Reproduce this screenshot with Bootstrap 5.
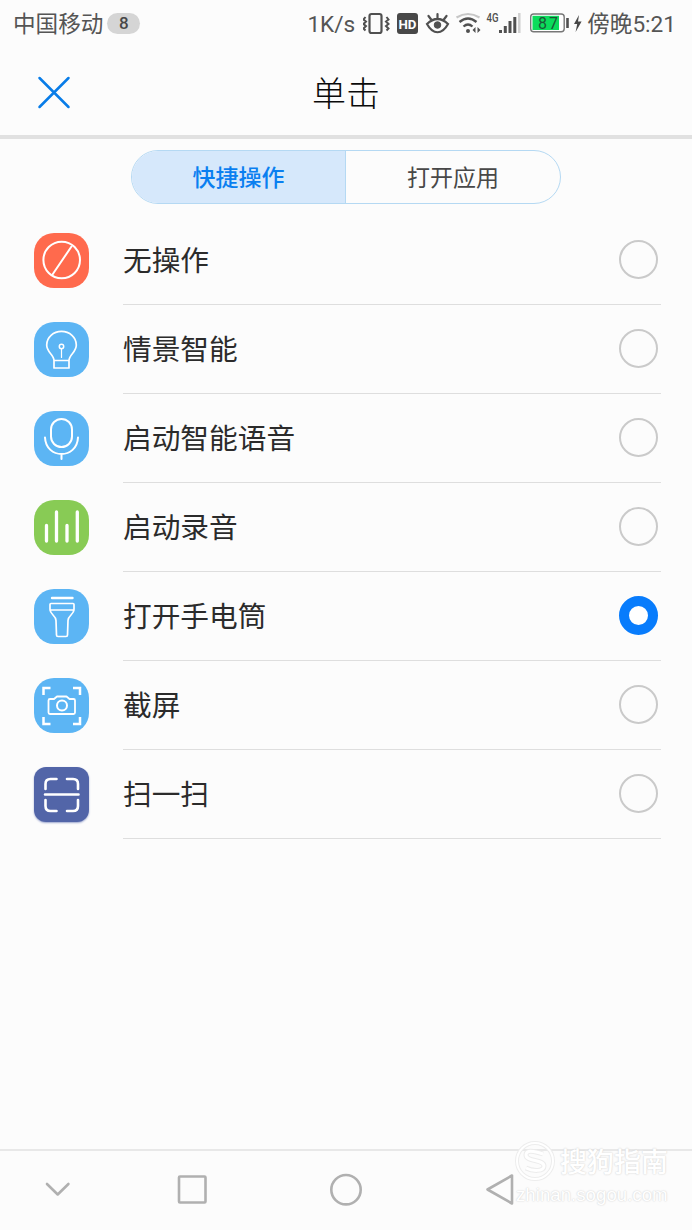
<!DOCTYPE html>
<html lang="zh-CN">
<head>
<meta charset="utf-8">
<meta name="viewport" content="width=device-width, initial-scale=1">
<title>单击</title>
<link rel="stylesheet" href="https://cdn.jsdelivr.net/npm/bootstrap@5.3.0/dist/css/bootstrap.min.css">
<style>
body{background:#fcfcfc;font-family:Roboto,"Noto Sans CJK SC",sans-serif;color:#2b2b2b;line-height:1;overflow:hidden}
svg{display:block;flex:none}
.screen{height:1230px}
.status{height:48px;padding:0 16px 0 13px;font-size:22.6px;color:#555;white-space:nowrap}
.status .txt{padding-top:3px}
.count{width:33px;height:21px;margin-left:4px;margin-bottom:2px;background:#d5d5d5;color:#484848;font-size:17px;font-weight:500}
.topbar{height:91px;border-bottom:4px solid #e1e1e1}
.topbar h1{font-size:34px;color:#0a0a0a;font-weight:300;padding-top:6px}
.close-btn{left:37px;top:28px}
.tabs{width:430px;height:54px;margin-top:11px;border:1.5px solid #b5d9f3;font-size:23px}
.tabs button{color:#484848;line-height:1;padding:3px 0 0}
.tabs button.on{background:#d6e8fb;color:#0a7ff0;border-right:1.5px solid #b5d9f3!important;font-weight:500}
.actions{margin-top:11.6px}
.item{height:89.05px;padding-left:34px;padding-right:31px}
.item .tile{width:55px;height:55px;border-radius:20px;background:#5cb5f4}
.item .tile svg{fill:none;stroke:#fff;stroke-width:2;stroke-linecap:round;stroke-linejoin:round}
.item .tile.red{background:#ff6a4d}
.item .tile.green{background:#88cb55}
.item .tile.navy{background:#5265a8;border-radius:12px;box-shadow:0 1px 2px #9ba6cf}
.item .line{margin-left:34px;border-bottom:1.5px solid #dedede;font-size:28.7px;padding-right:3px;padding-top:3px}
.item input{width:39px;height:39px;margin:0 0 4px;appearance:none;border:2px solid #cacaca;border-radius:50%}
.item input:checked{border:10px solid #087cfc;background:#fff}
.navkeys{height:81px;border-top:2px solid #e8e8e8}
.navkeys svg{fill:none;stroke:#b0b0b0;stroke-width:2.6;stroke-linejoin:round;stroke-linecap:round}
.stamp{left:514px;top:1139px;width:178px;color:#fff;text-shadow:0 0 2px #d5d5d5,0 0 1px #ddd;pointer-events:none}
.stamp strong{font-size:27px;font-weight:500;padding-top:4px}
.stamp small{font-family:"Liberation Sans",sans-serif;font-size:18.7px;padding-top:2px;margin-left:2px;line-height:20px}
</style>
</head>
<body>
<div class="screen position-relative d-flex flex-column">
  <header class="status d-flex align-items-center">
    <span class="txt">中国移动</span>
    <span class="count rounded-pill d-flex align-items-center justify-content-center">8</span>
    <div class="d-flex align-items-center ms-auto">
      <span class="txt">1K/s</span>
      <svg class="ms-2" width="220" height="48" viewBox="362 0 220 48" fill="none" stroke="#505050">
        <rect x="368.500" y="14" width="12" height="19" rx="2" stroke-width="2.200"/>
        <path d="M364.500 17l-2 2.500 2.500 2-2.500 2.500 2.500 2-2.500 2.500 2 2M385.500 17l2 2.500-2.500 2 2.500 2.500-2.500 2 2.500 2.500-2 2" stroke-width="2"/>
        <rect x="396" y="13" width="21" height="21" rx="3" fill="#484848" stroke="none"/>
        <text x="406.500" y="28.500" font-size="13.500" font-weight="700" text-anchor="middle" textLength="18" lengthAdjust="spacingAndGlyphs" fill="#fff" stroke="none">HD</text>
        <path d="M426 24q10.500-10 21 0c-6 11-15 11-21 0zM436.500 14v5M427.500 16l3 4M445.500 16l-3 4" stroke-width="2.200" stroke-linecap="round"/>
        <circle cx="436.500" cy="25" r="3.300" fill="#505050"/>
        <path d="M455.500 17.500q11.500-7 23 0" stroke="#c7c7c7" stroke-width="2.200"/>
        <path d="M458.500 22q8.500-7 17 0M462.500 26.500q4.500-4 9 0" stroke-width="2.300"/>
        <circle cx="467" cy="31" r="2" fill="#505050" stroke="none"/>
        <path d="M474.500 27v6l-3-3zM476.500 27v6l3-3z" fill="#505050" stroke="none"/>
        <text x="485.500" y="21.500" font-size="12.500" font-weight="500" textLength="12" lengthAdjust="spacingAndGlyphs" fill="#505050" stroke="none">4G</text>
        <path d="M499.500 30v3M504.300 26v7M509 21v12M513.800 17v16" stroke-width="3" stroke-linecap="butt"/>
        <path d="M518.300 13v20" stroke="#d0d0d0" stroke-width="2.500"/>
        <rect x="529.700" y="14" width="33.500" height="17.800" rx="3" fill="#fff" stroke="#777" stroke-width="1.400"/>
        <rect x="531.500" y="15.800" width="26.500" height="14.200" fill="#0bdc5b" stroke="none"/>
        <text x="547" y="28.800" font-size="16" text-anchor="middle" textLength="20" fill="#1b5636" stroke="none">87</text>
        <path d="M566.500 18v10" stroke-width="2.600"/>
        <path d="M578 15l-5 9h3.200l-1.600 8 6-10.500h-3.600z" fill="#484848" stroke="none"/>
      </svg>
      <span class="txt ms-1">傍晚5:21</span>
    </div>
  </header>

  <div class="topbar position-relative d-flex align-items-center justify-content-center">
    <button class="close-btn position-absolute border-0 bg-transparent p-0" aria-label="关闭">
      <svg width="34" height="34" viewBox="0 0 34 34" stroke="#087ce8" stroke-width="2.500" stroke-linecap="round"><path d="M2.500 2l29 29M31.500 2L2.500 31"/></svg>
    </button>
    <h1 class="m-0">单击</h1>
  </div>

  <div class="tabs d-flex rounded-pill overflow-hidden mx-auto flex-shrink-0">
    <button class="on w-50 border-0">快捷操作</button>
    <button class="w-50 border-0 bg-transparent">打开应用</button>
  </div>

  <main class="actions">
    <label class="item d-flex align-items-center">
      <span class="tile red"><svg width="55" height="55"><circle cx="27.700" cy="27" r="18.300"/><path d="M18.500 41.500L37.500 13.500"/></svg></span>
      <span class="line d-flex align-items-center justify-content-between flex-grow-1 h-100">无操作<input type="radio" name="act"></span>
    </label>
    <label class="item d-flex align-items-center">
      <span class="tile"><svg width="55" height="55"><path d="M20 38.500c0-6-7.300-8-7.300-15.500a14.800 13.600 0 0 1 29.600 0c0 7.500-7.300 9.500-7.300 15.500zM20 38.500v7.500h15v-7.500" style="stroke-width:1.700"/><path d="M27.500 27v8.500" style="stroke-width:1.200"/><circle cx="27.500" cy="24.500" r="2.200" style="stroke-width:1.500"/></svg></span>
      <span class="line d-flex align-items-center justify-content-between flex-grow-1 h-100">情景智能<input type="radio" name="act"></span>
    </label>
    <label class="item d-flex align-items-center">
      <span class="tile"><svg width="55" height="55"><rect x="17" y="8" width="21" height="28" rx="10.500"/><path d="M11 26.500c1 22 32 22 33 0M27.500 43.500v4.500"/></svg></span>
      <span class="line d-flex align-items-center justify-content-between flex-grow-1 h-100">启动智能语音<input type="radio" name="act"></span>
    </label>
    <label class="item d-flex align-items-center">
      <span class="tile green"><svg width="55" height="55"><g style="stroke-width:3.300"><path d="M12.500 25.500v15.500M22.500 12v29M33 25.500v15.500M43.300 12v29"/></g></svg></span>
      <span class="line d-flex align-items-center justify-content-between flex-grow-1 h-100">启动录音<input type="radio" name="act"></span>
    </label>
    <label class="item d-flex align-items-center">
      <span class="tile"><svg width="55" height="55"><path d="M18 9h20.500" style="stroke-width:2.400"/><g style="stroke-width:1.700"><path d="M17 14.500h22q1 0 1 1v5c0 5-6 6-6 11l-.500 14.500q0 1.500-1.500 1.500h-8q-1.500 0-1.500-1.500L22 31.500c0-5-6-6-6-11v-5q0-1 1-1zM16 21h24"/></g></svg></span>
      <span class="line d-flex align-items-center justify-content-between flex-grow-1 h-100">打开手电筒<input type="radio" name="act" checked></span>
    </label>
    <label class="item d-flex align-items-center">
      <span class="tile"><svg width="55" height="55"><path d="M9.500 17v-7h7M39 10h7v7M9.500 39v7h7M39 46h7v-7" style="stroke-width:2.500;stroke-linecap:butt;stroke-linejoin:miter"/><path d="M16 21h4l3-2.500h9.500l3 2.500h4q1.500 0 1.500 1.500v12q0 1.500-1.500 1.500h-23.500q-1.500 0-1.500-1.500v-12q0-1.500 1.500-1.500z" style="stroke-width:1.800"/><circle cx="28" cy="27.500" r="5"/></svg></span>
      <span class="line d-flex align-items-center justify-content-between flex-grow-1 h-100">截屏<input type="radio" name="act"></span>
    </label>
    <label class="item d-flex align-items-center">
      <span class="tile navy"><svg width="55" height="55"><path d="M11.500 22v-5q0-5 5-5h6M33 12h6q5 0 5 5v5M11.500 33v6q0 5 5 5h6M33 44h6q5 0 5-5v-6M11 27.500h33.500" style="stroke-width:2.600"/></svg></span>
      <span class="line d-flex align-items-center justify-content-between flex-grow-1 h-100">扫一扫<input type="radio" name="act"></span>
    </label>
  </main>

  <nav class="navkeys mt-auto d-flex align-items-center">
    <svg width="692" height="79" viewBox="0 1151 692 79"><path d="M47 1184l10.700 10.500 10.700-10.500"/><rect x="179" y="1176.500" width="26.500" height="26" rx="1"/><circle cx="346" cy="1189.700" r="14.700"/><path d="M512 1175.500v28L487.500 1189.500z"/></svg>
  </nav>

  <div class="stamp position-absolute">
    <div class="d-flex align-items-center">
      <svg width="42" height="44" viewBox="0 0 42 44" fill="none"><circle cx="21" cy="22" r="18" stroke="#ededed" stroke-width="4"/><circle cx="21" cy="22" r="18" stroke="#fff" stroke-width="2"/><path d="M29 15q-17-6-17 1c0 7 18 4 18 11 0 6-12 5-18 2" stroke="#ececec" stroke-width="5"/><path d="M29 15q-17-6-17 1c0 7 18 4 18 11 0 6-12 5-18 2" stroke="#fff" stroke-width="3"/></svg>
      <strong class="ms-1">搜狗指南</strong>
    </div>
    <small class="d-block">zhinan.sogou.com</small>
  </div>
</div>
<script src="https://cdn.jsdelivr.net/npm/bootstrap@5.3.0/dist/js/bootstrap.bundle.min.js"></script>
</body>
</html>
